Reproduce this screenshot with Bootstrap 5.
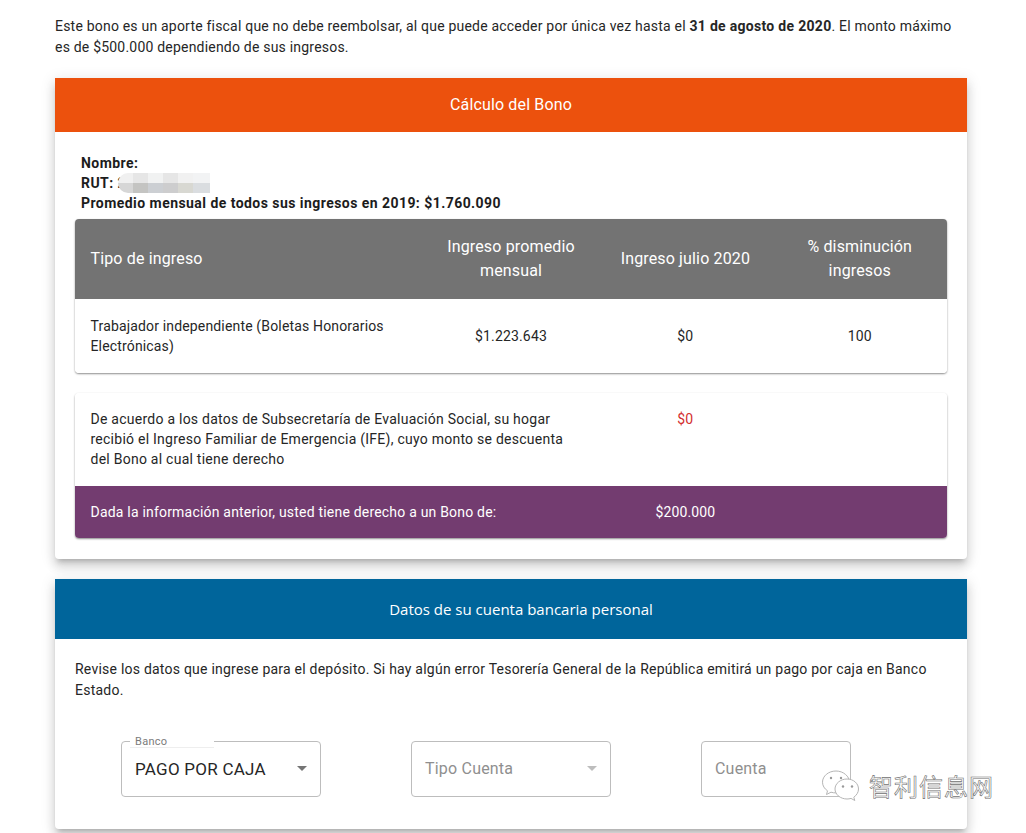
<!DOCTYPE html>
<html lang="es">
<head>
<meta charset="utf-8">
<title>Cálculo del Bono</title>
<link href="https://cdn.jsdelivr.net/npm/bootstrap@5.3.0/dist/css/bootstrap.min.css" rel="stylesheet">
<style>
html,body{height:833px;overflow:hidden}
body{margin:0;background:#fff;color:#262626;font-family:Roboto,"Liberation Sans",sans-serif;font-size:14px;line-height:20px;letter-spacing:.2px}
.page-wrap{padding:16px 59px 0 55px;position:relative;height:833px;overflow:hidden}
.intro{margin:0 0 20px;line-height:21px;letter-spacing:.205px}
.intro strong{font-weight:700;letter-spacing:.3px}
.panel{background:#fff;border-radius:0 0 4px 4px;box-shadow:0 5px 5px -3px rgba(0,0,0,.2),0 8px 10px 1px rgba(0,0,0,.1),0 3px 14px 2px rgba(0,0,0,.1)}
.panel-orange{height:481px;margin-bottom:20px}
.head-orange{background:#ec510d;color:#fff;height:54px;font-size:16px;letter-spacing:.15px}
.head-blue{background:#00659b;color:#fff;height:60px;font-size:15px;font-family:"Open Sans",sans-serif;letter-spacing:0;padding-left:20px}
.panel-body-a{padding:21px 20px 20px}
.who{font-weight:700;padding-left:6px;height:66px;color:#1c1c1c;letter-spacing:.45px}
.who>div{height:20px}
.mosaic{display:inline-block;vertical-align:top;margin-left:-8px;border-radius:10px 0 0 10px}
.sheet{border-radius:4px;overflow:hidden;box-shadow:0 1px 2px rgba(0,0,0,.45);margin-bottom:20px}
.tbl{display:grid;grid-template-columns:40% 20% 20% 20%;margin:0}
.tbl-head{background:#737373;color:#fff;font-size:16px;line-height:24px;letter-spacing:.15px;min-height:80px;align-items:center;text-align:center}
.tbl-row{min-height:74px;align-items:center;text-align:center;background:#fff;letter-spacing:.16px}
.cell-l{text-align:left;padding-left:15.500px;padding-right:16px}
.cell-c{padding:0 16px}
.sheet2{display:grid;grid-template-columns:60% 20% 20%}
.s2-top{height:93px;padding-top:16px;background:#fff;letter-spacing:.25px}
.s2-text{padding:0 15.500px}
.s2-val{text-align:center;color:#d32f2f}
.s2-bot{height:52px;background:#733c70;color:#fff;align-items:center}
.s2-bot .s2-val{color:#fff;font-weight:400;letter-spacing:.1px}
.s2-text-bot{font-size:14px;letter-spacing:.2px;padding:0 15.500px}
.panel-blue{height:250px}
.bank-note{padding:20px 20px 0;line-height:21px;margin:0;letter-spacing:.23px}
.field-row{padding:40px 0 0 66px;gap:90px}
.fake-field{height:56px;width:200px;border:1px solid #bdbdbd;border-radius:4px;position:relative;background:#fff;padding:0 13px;font-size:16px;letter-spacing:.2px}
.fake-field.short{width:150px}
.fake-field.muted{color:#8f8f8f}
.strong-val{font-size:17px;letter-spacing:.25px}
.float-lab{position:absolute;left:8px;top:-6px;width:84px;height:12px;background:#fff;border-bottom:1px solid #eee;font-size:11px;line-height:11px;padding-left:5px;color:#7b7b7b;letter-spacing:.3px}
.caret{position:absolute;right:13px;top:24px;border-left:5px solid transparent;border-right:5px solid transparent;border-top:5px solid #757575}
.muted .caret{border-top-color:#bdbdbd}
.wm{position:absolute;left:821px;top:769px;display:flex;align-items:center;gap:8px;z-index:5}
.wm-text{font-family:"Noto Sans CJK SC",sans-serif;font-size:24px;line-height:32px;letter-spacing:1px;color:#fff;-webkit-text-stroke:.6px #6f6f6f}
</style>
</head>
<body>
<div class="page-wrap">
  <p class="intro">Este bono es un aporte fiscal que no debe reembolsar, al que puede acceder por única vez hasta el <strong>31 de agosto de 2020</strong>. El monto máximo es de $500.000 dependiendo de sus ingresos.</p>

  <section class="panel panel-orange">
    <div class="head-orange d-flex align-items-center justify-content-center">Cálculo del Bono</div>
    <div class="panel-body-a">
      <div class="who">
        <div>Nombre:</div>
        <div>RUT: 2<svg class="mosaic" width="92" height="20" viewBox="0 0 92 20"><rect width="15" height="10" fill="#f0f0f0"/><rect y="10" width="15" height="10" fill="#d6d6d6"/><rect x="15" width="15" height="10" fill="#e6e6e6"/><rect x="15" y="10" width="15" height="10" fill="#c4c4c2"/><rect x="30" width="15" height="10" fill="#f1f2f2"/><rect x="30" y="10" width="15" height="10" fill="#cccfd3"/><rect x="45" width="15" height="10" fill="#e6e6e6"/><rect x="45" y="10" width="15" height="10" fill="#cdcdce"/><rect x="60" width="15" height="10" fill="#f1f1f1"/><rect x="60" y="10" width="15" height="10" fill="#d8d8d2"/><rect x="75" width="17" height="10" fill="#f2f3f4"/><rect x="75" y="10" width="17" height="10" fill="#dadde0"/></svg></div>
        <div>Promedio mensual de todos sus ingresos en 2019: $1.760.090</div>
      </div>
      <div class="sheet">
        <div class="tbl tbl-head">
          <div class="cell-l">Tipo de ingreso</div>
          <div class="cell-c">Ingreso promedio mensual</div>
          <div class="cell-c">Ingreso julio 2020</div>
          <div class="cell-c">% disminución ingresos</div>
        </div>
        <div class="tbl tbl-row">
          <div class="cell-l">Trabajador independiente (Boletas Honorarios Electrónicas)</div>
          <div class="cell-c">$1.223.643</div>
          <div class="cell-c">$0</div>
          <div class="cell-c">100</div>
        </div>
      </div>
      <div class="sheet mb-0">
        <div class="sheet2 s2-top">
          <div class="s2-text">De acuerdo a los datos de Subsecretaría de Evaluación Social, su hogar recibió el Ingreso Familiar de Emergencia (IFE), cuyo monto se descuenta del Bono al cual tiene derecho</div>
          <div class="s2-val">$0</div>
          <div></div>
        </div>
        <div class="sheet2 s2-bot">
          <div class="s2-text-bot">Dada la información anterior, usted tiene derecho a un Bono de:</div>
          <div class="s2-val">$200.000</div>
          <div></div>
        </div>
      </div>
    </div>
  </section>

  <section class="panel panel-blue">
    <div class="head-blue d-flex align-items-center justify-content-center">Datos de su cuenta bancaria personal</div>
    <p class="bank-note">Revise los datos que ingrese para el depósito. Si hay algún error Tesorería General de la República emitirá un pago por caja en Banco Estado.</p>
    <div class="d-flex field-row">
      <div class="fake-field d-flex align-items-center"><span class="float-lab">Banco</span><span class="strong-val">PAGO POR CAJA</span><span class="caret"></span></div>
      <div class="fake-field muted d-flex align-items-center">Tipo Cuenta<span class="caret"></span></div>
      <div class="fake-field short muted d-flex align-items-center">Cuenta</div>
    </div>
  </section>

  <div class="wm">
    <svg width="40" height="34" viewBox="0 0 40 34" fill="#fff" stroke="#b5b5b5" stroke-width="1">
      <path d="M15 2C7.5 2 1.500 7 1.500 13.200c0 3.600 2 6.600 5 8.600L5.500 25.500l4.500-2.300c1.600.5 3.200.7 5 .7 7.500 0 13.500-5 13.500-10.700S22.500 2 15 2z"/>
      <circle cx="10" cy="9" r="1.200" fill="#999" stroke="none"/><circle cx="20" cy="9" r="1.200" fill="#999" stroke="none"/>
      <path d="M26 10c-6.500 0-12 4.500-12 10s5.500 10 12 10c1.300 0 2.700-.2 4-.6l3.800 2.100-1-3.300c2.800-1.900 4.700-4.900 4.700-8.200C37.500 14.500 32.500 10 26 10z"/>
      <circle cx="22" cy="17.500" r="1.200" fill="#999" stroke="none"/><circle cx="31" cy="17.500" r="1.200" fill="#999" stroke="none"/>
    </svg>
    <span class="wm-text">智利信息网</span>
  </div>
</div>
<script src="https://cdn.jsdelivr.net/npm/bootstrap@5.3.0/dist/js/bootstrap.bundle.min.js"></script>
</body>
</html>
